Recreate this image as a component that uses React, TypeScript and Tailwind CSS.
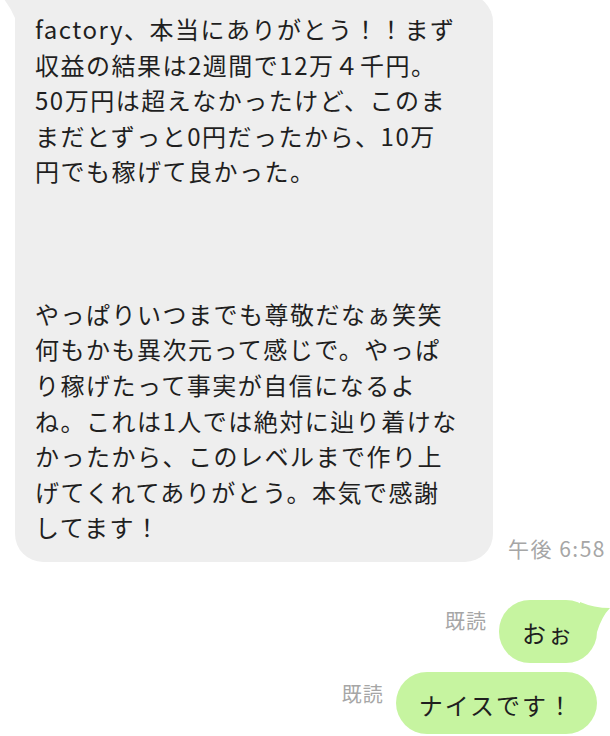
import React from "react";

const msg1 =
  "factory、本当にありがとう！！まず\n収益の結果は2週間で12万４千円。\n50万円は超えなかったけど、このま\nまだとずっと0円だったから、10万\n円でも稼げて良かった。\n\n\n\nやっぱりいつまでも尊敬だなぁ笑笑\n何もかも異次元って感じで。やっぱ\nり稼げたって事実が自信になるよ\nね。これは1人では絶対に辿り着けな\nかったから、このレベルまで作り上\nげてくれてありがとう。本気で感謝\nしてます！";

export default function App() {
  return (
    <div className="w-[610px] h-[736px] overflow-hidden bg-white font-['Noto_Sans_CJK_JP',sans-serif] text-[#1f1f1f]">
      <div className="flex items-end mt-[-6px] pl-[15px]">
        <div className="relative w-[478px] rounded-[28px] bg-[#eeeeee] px-[20px] pt-[17px] pb-[17px] text-[24px] leading-[35.6px] tracking-[1.5px] whitespace-pre">
          <svg
            className="absolute left-[-15px] top-0"
            width="30"
            height="30"
            viewBox="0 0 30 30"
          >
            <path d="M0 0 Q10 12 15 24 L15 30 L30 30 L30 0 Z" fill="#eeeeee" />
          </svg>
          {msg1}
        </div>
        <div className="ml-[15px] text-[21px] leading-[28px] tracking-[1.5px] text-[#a6a6a6] whitespace-nowrap">
          午後 6:58
        </div>
      </div>

      <div className="flex justify-end items-start pr-[13px] mt-[38px]">
        <div className="mt-[7px] mr-[12px] text-[20px] leading-[28px] tracking-[1px] text-[#a6a6a6]">
          既読
        </div>
        <div className="relative rounded-[31px] bg-[#c6f4a0] px-[23px] pt-[15px] pb-[12px] text-[24px] leading-[35.6px] tracking-[2px] whitespace-nowrap">
          <svg
            className="absolute right-[-13px] top-0"
            width="30"
            height="32"
            viewBox="0 0 30 32"
          >
            <path d="M0 2 Q14 8 30 8 Q22 16 17 32 L0 32 Z" fill="#c6f4a0" />
          </svg>
          <span className="relative">おぉ</span>
        </div>
      </div>

      <div className="flex justify-end items-start pr-[13px] mt-[9px]">
        <div className="mt-[8px] mr-[12px] text-[20px] leading-[28px] tracking-[1px] text-[#a6a6a6]">
          既読
        </div>
        <div className="rounded-[31px] bg-[#c6f4a0] px-[23px] pt-[15px] pb-[12px] text-[24px] leading-[35.6px] tracking-[2px] whitespace-nowrap">
          ナイスです！
        </div>
      </div>
    </div>
  );
}
